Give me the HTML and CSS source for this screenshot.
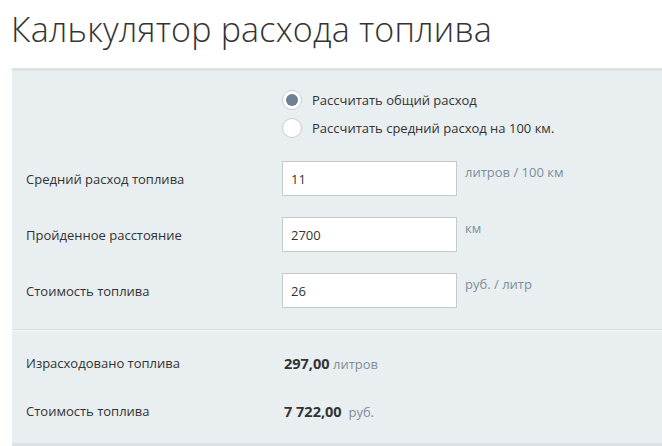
FILE: index.html
```html
<!DOCTYPE html>
<html lang="ru">
<head>
  <meta charset="UTF-8" />
  <title>Калькулятор расхода топлива</title>
  <link rel="stylesheet" href="styles.css">
</head>
<body>

  <h1 class="page-title">Калькулятор расхода топлива</h1>

  <div class="calc">
    <div class="calc-form">
      <div class="modes">
        <label class="mode"><span class="radio checked"></span> Рассчитать общий расход</label>
        <label class="mode"><span class="radio"></span> Рассчитать средний расход на 100 км.</label>
      </div>

      <div class="field">
        <div class="field-label">Средний расход топлива</div>
        <div class="input">11</div>
        <div class="unit">литров / 100 км</div>
      </div>
      <div class="field">
        <div class="field-label">Пройденное расстояние</div>
        <div class="input">2700</div>
        <div class="unit">км</div>
      </div>
      <div class="field">
        <div class="field-label">Стоимость топлива</div>
        <div class="input">26</div>
        <div class="unit">руб. / литр</div>
      </div>
    </div>

    <div class="calc-result">
      <div class="result">
        <div class="field-label">Израсходовано топлива</div>
        <div class="value"><b>297,00</b> <span class="unit-inline">литров</span></div>
      </div>
      <div class="result">
        <div class="field-label">Стоимость топлива</div>
        <div class="value"><b>7 722,00</b>&nbsp; <span class="unit-inline">руб.</span></div>
      </div>
    </div>
  </div>

</body>
</html>
```

FILE: styles.css
```css
body {
  margin: 0;
  font-family: "Open Sans", "Liberation Sans", sans-serif;
  font-size: 13px;
  color: #333;
  background: #fff;
  overflow: hidden;
}
.page-title {
  margin: 0;
  padding: 6px 0 0 11px;
  height: 68px;
  box-sizing: border-box;
  font-size: 34px;
  font-weight: 300;
  color: #333;
  letter-spacing: 0.2px;
}
.calc {
  margin-left: 12px;
  background: #e9eef0;
  border-top: 3px solid #dbe3e6;
  border-bottom: 4px solid #dbe3e6;
}
.calc-form {
  padding: 19px 0 21px 14px;
  border-bottom: 1px solid #d6dfe2;
}
.modes {
  display: flex;
  flex-direction: column;
  gap: 8px;
  margin-left: 256px;
  margin-bottom: 23px;
}
.mode {
  display: flex;
  align-items: center;
  gap: 10px;
  height: 20px;
}
.radio {
  width: 18px;
  height: 18px;
  border: 1px solid #c6cdd2;
  border-radius: 50%;
  background: #fff;
  position: relative;
}
.radio.checked::after {
  content: "";
  position: absolute;
  left: 3px;
  top: 3px;
  width: 12px;
  height: 12px;
  border-radius: 50%;
  background: #6d8192;
}
.field {
  display: grid;
  grid-template-columns: 256px 175px auto;
  align-items: center;
  margin-bottom: 21px;
}
.field:last-child { margin-bottom: 0; }
.input {
  height: 35px;
  box-sizing: border-box;
  border: 1px solid #c4cbcf;
  background: #fff;
  padding: 0 8px;
  line-height: 35px;
  color: #333;
}
.unit {
  align-self: start;
  margin: 2px 0 0 8px;
  color: #7c8e9d;
}
.calc-result {
  padding: 8px 0 8px 14px;
  border-top: 1px solid #f6f8f9;
}
.result {
  display: grid;
  grid-template-columns: 258px auto;
  align-items: center;
  height: 48px;
}
.value b {
  font-size: 14.5px;
  font-weight: 700;
  color: #333;
}
.unit-inline {
  color: #7c8e9d;
}
```
